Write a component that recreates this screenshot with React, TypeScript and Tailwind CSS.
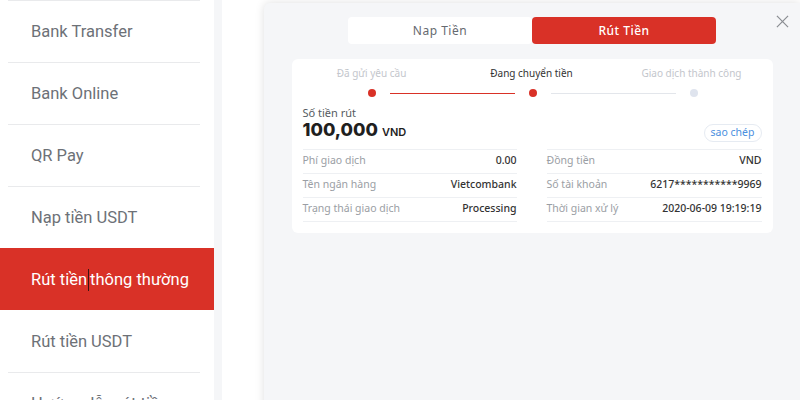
import React from "react";

const items = [
  "Bank Transfer",
  "Bank Online",
  "QR Pay",
  "Nạp tiền USDT",
  "Rút tiền thông thường",
  "Rút tiền USDT",
  "Hướng dẫn rút tiền",
];
const activeIndex = 4;

function Sidebar() {
  return (
    <aside className="w-[214px] shrink-0 bg-white" style={{ fontFamily: "Roboto, 'Noto Sans', sans-serif" }}>
      {items.map((label, i) => {
        const active = i === activeIndex;
        const showLine = i !== activeIndex && i !== activeIndex + 1;
        return (
          <div key={label} className="relative h-[62px]">
            {showLine && <div className="absolute left-[8px] top-0 h-px w-[192px] bg-[#e9eaec]" />}
            <div
              className={
                active
                  ? "flex h-full items-center bg-[#d93127] pl-[31px] pt-[2px] text-[16.5px] text-white"
                  : "flex h-full items-center pl-[31px] pt-[2px] text-[16.5px] text-[#6d7177]"
              }
            >
              {active ? (
                <span>
                  Rút tiền
                  <span className="mx-[1px] inline-block h-[22px] w-px bg-[#3b1512] align-middle" />
                  thông thường
                </span>
              ) : (
                label
              )}
            </div>
          </div>
        );
      })}
    </aside>
  );
}

function Steps() {
  return (
    <div className="pt-[7px]">
      <div className="grid grid-cols-[160px_160px_160px] text-[10px] leading-[14px]">
        <div className="text-center text-[#c3c6cc]">Đã gửi yêu cầu</div>
        <div className="text-center text-[#333333]">Đang chuyển tiền</div>
        <div className="text-center text-[#c3c6cc]">Giao dịch thành công</div>
      </div>
      <div className="mt-[9px] flex items-center pl-[76px]">
        <div className="h-[8px] w-[8px] rounded-full bg-[#d93127]" />
        <div className="mx-[14px] h-px w-[125px] bg-[#d93127]" />
        <div className="h-[8px] w-[8px] rounded-full bg-[#d93127]" />
        <div className="mx-[14px] h-px w-[125px] bg-[#e3e6eb]" />
        <div className="h-[8px] w-[8px] rounded-full bg-[#dfe4ee]" />
      </div>
    </div>
  );
}

function Row({ label, value }: { label: string; value: string }) {
  return (
    <div className="flex h-[24px] items-center justify-between border-b border-[#eef0f3] text-[10.5px]">
      <span className="text-[#9a9ea4]">{label}</span>
      <span className="font-medium text-[#333333]">{value}</span>
    </div>
  );
}

function Card() {
  return (
    <div className="mx-auto mt-[15px] w-[481px] rounded-[6px] bg-white pb-[11px]">
      <Steps />
      <div className="px-[11px]">
        <div className="mt-[8px] text-[11px] leading-[15px] text-[#555a60]">Số tiền rút</div>
        <div className="flex items-end justify-between">
          <div className="flex items-baseline" style={{ fontFamily: "Inter, sans-serif" }}>
            <span className="text-[18px] font-extrabold leading-[20px] text-[#1f1f1f]">100,000</span>
            <span className="ml-[4px] text-[11px] font-semibold text-[#1f1f1f]">VND</span>
          </div>
          <div className="mb-[-1px] flex h-[18px] items-center rounded-full border border-[#e6ebf2] px-[6px] text-[10.5px] text-[#4a8fe0]">
            sao chép
          </div>
        </div>
        <div className="mt-[8px] grid grid-cols-[214px_215px] gap-x-[30px]">
          <div className="border-t border-[#eef0f3]">
            <Row label="Phí giao dịch" value="0.00" />
            <Row label="Tên ngân hàng" value="Vietcombank" />
            <Row label="Trạng thái giao dịch" value="Processing" />
          </div>
          <div className="border-t border-[#eef0f3]">
            <Row label="Đồng tiền" value="VND" />
            <Row label="Số tài khoản" value="6217***********9969" />
            <Row label="Thời gian xử lý" value="2020-06-09 19:19:19" />
          </div>
        </div>
      </div>
    </div>
  );
}

function Panel() {
  return (
    <div
      className="relative h-[420px] rounded-tl-[6px] bg-[#f5f6f8] pt-[14px] shadow-[0_0_10px_rgba(0,0,0,0.13)]"
      style={{ fontFamily: "'Noto Sans', Inter, sans-serif" }}
    >
      <button className="absolute right-[11px] top-[12px] h-[13px] w-[13px] text-[#8a8d92]">
        <svg viewBox="0 0 14 14" width="13" height="13" fill="none" stroke="currentColor" strokeWidth="1.3">
          <path d="M1 1 L13 13 M13 1 L1 13" />
        </svg>
      </button>
      <div className="mx-auto flex h-[27px] w-[368px]">
        <div className="flex flex-1 items-center justify-center rounded-[4px] bg-white text-[12px] tracking-[0.5px] text-[#666a70]">
          Nap Tiền
        </div>
        <div className="flex flex-1 items-center justify-center rounded-[4px] bg-[#d93127] text-[12px] font-medium tracking-[0.5px] text-white">
          Rút Tiền
        </div>
      </div>
      <Card />
    </div>
  );
}

export default function App() {
  return (
    <div className="flex h-[400px] w-[800px] overflow-hidden bg-white">
      <Sidebar />
      <div className="w-[8px] shrink-0 bg-[#f5f6f8]" />
      <main className="flex-1 bg-white pl-[42px] pt-[3px]">
        <Panel />
      </main>
    </div>
  );
}
